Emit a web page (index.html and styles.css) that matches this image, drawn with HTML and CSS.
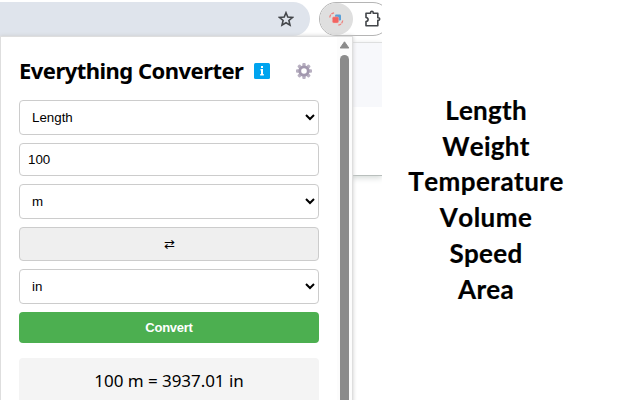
FILE: index.html
```html
<!DOCTYPE html>
<html lang="en">
<head>
<meta charset="utf-8">
<title>Everything Converter</title>
<link rel="stylesheet" href="styles.css">
</head>
<body>
<main class="stage">
  <section class="browser">
    <div class="toolbar">
      <div class="address">
        <svg class="star" width="16" height="16" viewBox="0 0 16 16"><path d="M8 1.700 9.800 6l4.700.4-3.600 3.100 1.100 4.600L8 11.700l-4 2.400 1.100-4.600L1.500 6.400 6.200 6Z" fill="none" stroke="#43464a" stroke-width="1.600"/></svg>
      </div>
      <div class="extensions">
        <div class="active-extension">
          <svg width="16" height="16" viewBox="0 0 16 16"><rect x="7" y="3.500" width="6" height="6" rx="1.200" fill="#5a9fd6"/><rect x="4.300" y="5.800" width="6.400" height="6.200" rx="1.400" fill="#f26461" stroke="#f6c4c2" stroke-width=".4"/><path d="M1.800 6.500C2 3.800 3.800 2 7 1.700M14.700 9.500c-.4 2.600-2 4.300-4.700 4.800" fill="none" stroke="#ee817d" stroke-width="1.300" stroke-dasharray="3 .8"/></svg>
        </div>
        <svg class="puzzle" width="18" height="18" viewBox="0 0 18 18"><path d="M2 3.200h4.600V2.500a1.300 1.300 0 0 1 2.600 0v.7h4.600v4.600h.6a1.300 1.300 0 0 1 0 2.600h-.6v5.400H2v-4.300c2.800-.4 2.800-3.600 0-4Z" fill="none" stroke="#43464a" stroke-width="1.600" stroke-linejoin="round"/></svg>
      </div>
    </div>
    <div class="page"><div class="band"></div></div>
    <div class="popup">
      <div class="content">
        <header class="heading">
          <h1>Everything Converter</h1>
          <svg class="info" width="16" height="16" viewBox="0 0 16 16"><rect width="16" height="16" rx="1.500" fill="#00a4ef"/><path d="M7 3h2v2H7zM6.500 6H9v5h.8v1.500H6.200V11H7V7.500h-.5z" fill="#fff"/></svg>
          <svg class="gear" width="16" height="16" viewBox="0 0 16 16"><g fill="#b8b0c1"><rect x="6.300" width="3.400" height="16" rx="1"/><rect x="6.300" width="3.400" height="16" rx="1" transform="rotate(45 8 8)"/><rect x="6.300" width="3.400" height="16" rx="1" transform="rotate(90 8 8)"/><rect x="6.300" width="3.400" height="16" rx="1" transform="rotate(135 8 8)"/></g><circle cx="8" cy="8" r="4.200" fill="#fff" stroke="#a298ae" stroke-width="2.800"/></svg>
        </header>
        <div class="form">
          <select class="field"><option>Length</option></select>
          <input class="field number" value="100">
          <select class="field"><option>m</option></select>
          <button class="field swap">⇄</button>
          <select class="field"><option>in</option></select>
          <button class="convert">Convert</button>
        </div>
        <div class="result"><span>100 m = 3937.01 in</span></div>
      </div>
      <div class="scrollbar">
        <svg width="11" height="8" viewBox="0 0 11 8"><path d="M5.500.8 9.800 7H1.200Z" fill="#8b8b8b" stroke="#8b8b8b" stroke-linejoin="round"/></svg>
        <div class="thumb"></div>
      </div>
    </div>
  </section>
  <section class="categories">
    <div>Length</div>
    <div>Weight</div>
    <div class="wide">Temperature</div>
    <div class="wide">Volume</div>
    <div>Speed</div>
    <div>Area</div>
  </section>
</main>
</body>
</html>
```
FILE: styles.css
```css
* { box-sizing: border-box; }
body { margin: 0; background: #fff; color: #000; overflow: hidden; }
svg { display: block; flex: none; }
.stage { display: flex; width: 640px; height: 400px; overflow: hidden; }
.browser { position: relative; flex: none; width: 382px; height: 400px; overflow: hidden; }
.toolbar { display: flex; height: 42px; padding-top: 2px; }
.address { display: flex; flex: none; justify-content: flex-end; width: 310px; height: 34px; padding: 9px 16px 0 0; background: #dfe4ec; border-radius: 0 17px 17px 0; }
.extensions { display: flex; flex: none; width: 71px; height: 34px; margin-left: 9px; border: 1px solid #b5b5b5; border-radius: 17px; }
.active-extension { display: flex; align-items: center; justify-content: center; width: 33px; height: 32px; padding-right: 1px; border-radius: 16px; background: #dfdfdf; }
.puzzle { margin: 7px 0 0 11px; }
.page { height: 134px; border-top: 1px solid #dedfdf; border-bottom: 1px solid #b9bfbd; box-shadow: 0 2px 6px #d5dad8; }
.band { height: 64px; background: #f7f8fb; }
.popup { position: absolute; left: 0; top: 36px; display: flex; width: 353px; height: 380px; border: 1px solid #dedede; background: #fff; box-shadow: 0 0 4px #ccc; }
.content { width: 336px; padding: 22px 18px 0; }
.heading { display: flex; height: 41px; }
h1 { flex: none; width: 235px; margin: -2px 0 0; font: bold 22px/26px "Noto Sans", sans-serif; letter-spacing: -.53px; white-space: nowrap; }
.info { margin-top: 4px; }
.gear { margin: 4px 0 0 26px; }
.form { display: flex; flex-direction: column; gap: 8px; width: 300px; }
.field { width: 300px; height: 35px; margin: 0; padding: 8px; border: 1px solid #ccc; border-radius: 4px; background: #fff; color: #000; font: 13.333px "Liberation Sans", sans-serif; }
.number { height: 33px; }
.swap { height: 34px; background: #efefef; }
.convert { height: 31px; padding: 0; border: 0; border-radius: 4px; background: #4caf50; color: #fff; font: bold 13px "Liberation Sans", sans-serif; letter-spacing: -.25px; }
.result { width: 300px; height: 50px; margin-top: 15px; border-radius: 4px; background: #f4f4f4; font: 17px/45px "Noto Sans", sans-serif; letter-spacing: -.05px; text-align: center; white-space: nowrap; }
.scrollbar { display: flex; flex-direction: column; align-items: center; width: 15px; padding-top: 4px; background: #fcfcfc; }
.thumb { width: 9px; height: 350px; margin-top: 6px; border-radius: 5px; background: #8b8b8b; }
.categories { width: 208px; padding-top: 93px; font: bold 26px/35.700px Lato, sans-serif; font-kerning: none; letter-spacing: .25px; text-align: center; white-space: nowrap; -webkit-text-stroke: .2px #000; }
.wide { letter-spacing: .45px; }
```
